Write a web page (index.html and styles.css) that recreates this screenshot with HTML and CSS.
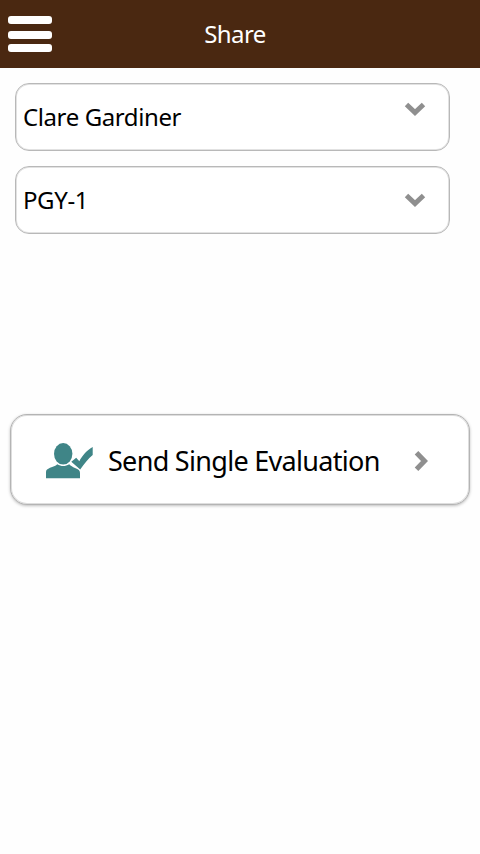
FILE: index.html
```html
<!DOCTYPE html>
<html lang="en">
  <head>
    <meta charset="UTF-8" />
    <meta name="viewport" content="width=device-width, initial-scale=1.0" />
    <title>Share</title>
    <link rel="stylesheet" href="styles.css">
  </head>
  <body>
    <header class="header">
      <button class="menu" aria-label="Menu">
        <span class="bar"></span>
        <span class="bar bar-middle"></span>
        <span class="bar"></span>
      </button>
      <h1 class="title">Share</h1>
    </header>

    <main>
      <div class="fields">
        <div class="select">
          <span class="name">Clare Gardiner</span>
          <svg class="arrow arrow-top" width="22" height="16" viewBox="0 0 22 16">
            <path d="M2.5 3.5 L11 11.5 L19.5 3.5" />
          </svg>
        </div>
        <div class="select">
          <span class="level">PGY-1</span>
          <svg class="arrow" width="22" height="16" viewBox="0 0 22 16">
            <path d="M2.5 3.5 L11 11.5 L19.5 3.5" />
          </svg>
        </div>
      </div>

      <button class="send">
        <svg class="user" width="48" height="36" viewBox="0 0 48 36">
          <ellipse cx="18.2" cy="10.8" rx="9.2" ry="10.8" />
          <path d="M1 35.3 V29 C1 27 2.5 26 5 24.8 C8 23.6 10.5 23 12.3 21.2 C16 23.6 20.5 23.6 24.2 21.2 C26 23 27.5 23.8 30 25 C33.5 26.4 35 27.5 35 30 V35.3 Z" />
          <path class="tick" d="M26.3 18.8 L31.2 14.8 L34.3 18.2 C37.5 12.5 42 7 47.7 4 V12 C43 16 39.5 20.5 35.2 26.6 Z" />
        </svg>
        <span class="send-text">Send Single Evaluation</span>
        <svg class="arrow" width="16" height="22" viewBox="0 0 16 22">
          <path d="M2.5 2.8 L10.5 11 L2.5 19.2" />
        </svg>
      </button>
    </main>
  </body>
</html>
```
FILE: styles.css
```css
* {
  margin: 0;
  padding: 0;
  box-sizing: border-box;
}
body {
  min-height: 100vh;
  font-family: "Noto Sans", "Open Sans", sans-serif;
  background: #fefefe;
  color: #000;
}
button {
  font-family: inherit;
  border: none;
  background: none;
}

.header {
  height: 68px;
  display: grid;
  grid-template-columns: 60px 1fr 70px;
  align-items: center;
  background: #4a2811;
}
.menu {
  display: flex;
  flex-direction: column;
  padding-left: 8px;
}
.bar {
  width: 44px;
  height: 8px;
  border-radius: 3px;
  background: #fff;
}
.bar-middle {
  margin: 7px 0 5px;
}
.title {
  padding-bottom: 1px;
  text-align: center;
  font-size: 24px;
  font-weight: 400;
  line-height: 34px;
  letter-spacing: -0.6px;
  color: #fff;
}

.fields {
  width: 435px;
  margin: 15px 0 0 15px;
  display: flex;
  flex-direction: column;
  gap: 15px;
}
.select {
  height: 68px;
  padding: 0 23px 1px 7px;
  display: flex;
  justify-content: space-between;
  align-items: center;
  border: 1px solid #b8b8b8;
  border-radius: 14px;
  background: #fff;
  box-shadow: inset 0 0 0 1px #e2e2e2;
  font-size: 24px;
  letter-spacing: -0.4px;
}
.arrow {
  fill: none;
  stroke: #8f8f8f;
  stroke-width: 5;
}
.arrow-top {
  margin-bottom: 16px;
}

.send {
  width: 460px;
  height: 91px;
  margin: 180px 10px 0;
  padding: 2px 39px 0 34px;
  display: flex;
  align-items: center;
  border: 1px solid #b4b4b4;
  border-radius: 17px;
  background: #fff;
  box-shadow: inset 0 0 0 1px #dedede, 0 1px 3px rgba(0, 0, 0, 0.25);
  color: #000;
}
.send-text {
  flex: 1;
  margin-left: 15px;
  text-align: left;
  white-space: nowrap;
  font-size: 27px;
  letter-spacing: -0.7px;
}
.user {
  fill: #3f8587;
}
.tick {
  stroke: #fff;
  stroke-width: 1;
  paint-order: stroke;
}
```
